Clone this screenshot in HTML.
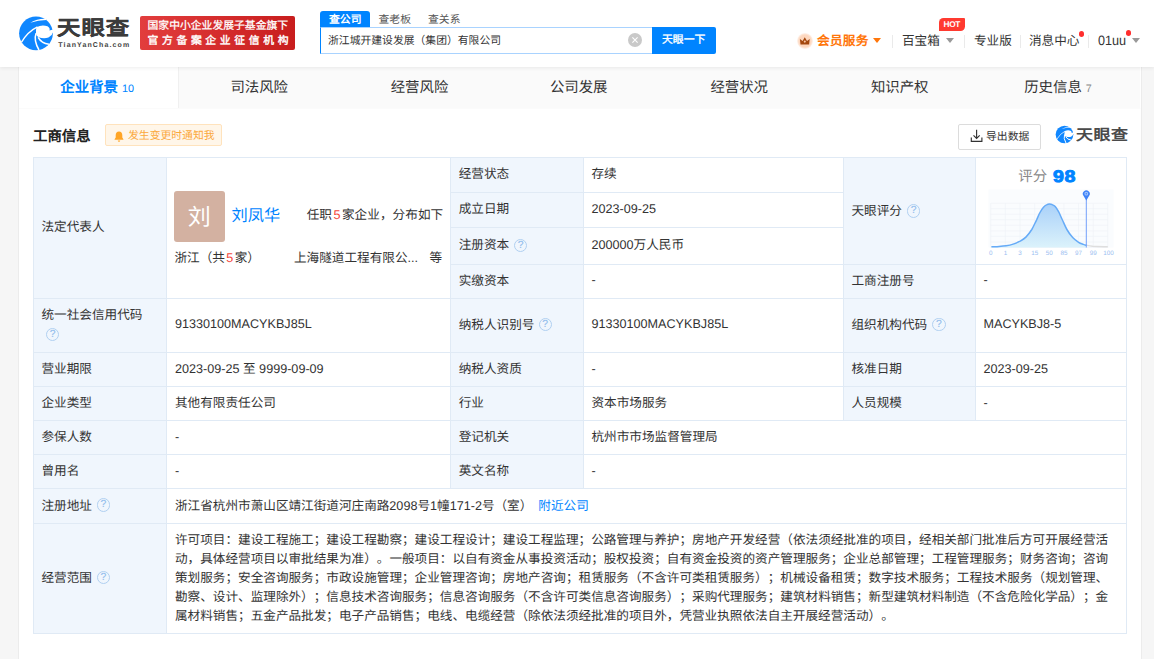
<!DOCTYPE html>
<html lang="zh-CN">
<head>
<meta charset="utf-8">
<title>天眼查</title>
<style>
*{box-sizing:border-box;margin:0;padding:0}
html,body{width:1154px;height:659px;overflow:hidden}
body{font-family:"Liberation Sans",sans-serif;background:#f6f6f6;color:#333;position:relative;font-size:12.62px;-webkit-font-smoothing:antialiased;text-rendering:geometricPrecision;text-spacing-trim:space-all}
.abs{position:absolute;white-space:nowrap}
#header{position:absolute;left:0;top:0;width:1154px;height:67px;background:#fff;box-shadow:0 1px 4px rgba(0,0,0,.075);z-index:5}
#main{position:absolute;left:18px;top:67px;width:1124px;height:592px;background:#fff;border-left:1px solid #ececec;border-right:1px solid #ececec}
/* tabs */
#tabs{position:absolute;left:0;top:0;width:1122px;height:42px;background:#fafafa;border-bottom:1px solid #fbfbfb;border-right:1px solid #fff}
#tabs .on{position:absolute;left:0;top:0;width:160px;height:41px;background:#fff;border-right:1px solid #f0f0f0}
.tab{position:absolute;top:0;height:42px;line-height:43px;font-size:14.42px;color:#333;white-space:nowrap;transform:translateX(-50%)}
.tab.a{color:#0084ff;font-weight:bold}
.tab small{font-size:10.82px;font-weight:normal;position:relative;top:-0.2px}
/* table */
.c{position:absolute;border:1px solid #e1ebf6;background:#fff}
.c.l{background:#f0f6fd}
.t{position:absolute;white-space:nowrap;font-size:12.62px;line-height:16px;color:#333}
.sc{width:933.2px;text-align:justify;text-align-last:justify}
.sc.last{width:auto;text-align:left;text-align-last:auto}
.q{position:absolute;width:13.4px;height:13.4px;border:1px solid #b0d0f1;border-radius:50%;color:#94beed;font-size:10.4px;line-height:12.9px;text-align:center;-webkit-text-stroke:0.15px #94beed}
.red{color:#f5483b}
.n5{margin:0 1.4px}
.blue{color:#0084ff}
</style>
</head>
<body>
<div id="header">
  <!-- logo -->
  <svg class="abs" style="left:14px;top:12px" width="44" height="42" viewBox="0 0 690 659">
    <circle cx="345" cy="335" r="265" fill="#1087ff"/>
    <path d="M256,167 Q365,102 505,108 L508,126 Q380,130 256,167Z" fill="#fff"/>
    <path d="M352,238 Q440,190 525,224 Q572,250 556,292 L640,268 L640,320 L611,320 Q598,372 540,402 Q470,426 385,398 Q350,370 345,340 Q340,280 352,238Z" fill="#fff"/>
    <path d="M368,232 Q216,306 118,472" stroke="#fff" stroke-width="22" fill="none"/>
    <path d="M346,335 Q305,450 392,596" stroke="#fff" stroke-width="24" fill="none"/>
    <path d="M378,398 Q430,490 548,506" stroke="#fff" stroke-width="24" fill="none"/>
  </svg>
  <div class="abs" style="left:57px;top:14px;font-size:20.6px;line-height:30px;font-weight:bold;color:#3b3b3b;-webkit-text-stroke:0.2px #3b3b3b;letter-spacing:0.9px;transform-origin:0 50%;transform:scaleX(1.135)">天眼查</div>
  <div class="abs" style="left:58.3px;top:40.6px;font-size:7px;line-height:9px;font-weight:bold;color:#444;letter-spacing:1.12px">TianYanCha.com</div>
  <!-- red banner -->
  <div class="abs" style="left:140px;top:16px;width:155px;height:34px;border-radius:2px;background:linear-gradient(90deg,#e23d3d,#c81d1d)"></div>
  <div class="abs" style="left:147.5px;top:18.6px;font-size:10.82px;line-height:15px;color:#fff;-webkit-text-stroke:0.28px #fff;letter-spacing:0">国家中小企业发展子基金旗下</div>
  <div class="abs" style="left:147.5px;top:33.5px;font-size:10.82px;line-height:15px;color:#fff;-webkit-text-stroke:0.42px #fff;letter-spacing:3.65px">官方备案企业征信机构</div>
  <!-- search -->
  <div class="abs" style="left:320px;top:11px;width:50px;height:17px;background:#0084ff;border-radius:3px 3px 0 0"></div>
  <div class="abs" style="left:329px;top:13px;font-size:10.82px;line-height:15px;font-weight:bold;color:#fff;letter-spacing:0">查公司</div>
  <div class="abs" style="left:378.5px;top:13px;font-size:10.82px;line-height:15px;color:#555;letter-spacing:0">查老板</div>
  <div class="abs" style="left:428px;top:13px;font-size:10.82px;line-height:15px;color:#555;letter-spacing:0">查关系</div>
  <div class="abs" style="left:320px;top:27px;width:333px;height:27px;border:1px solid #a9d3ff;border-left:1px solid #0084ff;background:#fff"></div>
  <div class="abs" style="left:328px;top:33.7px;font-size:10.82px;line-height:15px;color:#333;letter-spacing:0">浙江城开建设发展（集团）有限公司</div>
  <svg class="abs" style="left:628px;top:33px" width="14" height="14" viewBox="0 0 14 14"><circle cx="7" cy="7" r="7" fill="#c9c9c9"/><path d="M4.4 4.4L9.6 9.6M9.6 4.4L4.4 9.6" stroke="#fff" stroke-width="1.1"/></svg>
  <div class="abs" style="left:652px;top:27.3px;width:64px;height:27px;background:#0084ff;border-radius:0 2px 2px 0"></div>
  <div class="abs" style="left:662px;top:33.2px;font-size:10.82px;line-height:15px;color:#fff;-webkit-text-stroke:0.35px #fff;letter-spacing:0">天眼一下</div>
  <!-- nav -->
  <svg class="abs" style="left:797.2px;top:33.4px" width="16" height="16" viewBox="0 0 16 16"><defs><radialGradient id="cw"><stop offset="0.75" stop-color="#fdd8c0"/><stop offset="1" stop-color="#fdd8c0" stop-opacity="0.25"/></radialGradient></defs><circle cx="8" cy="8" r="8" fill="url(#cw)"/><path d="M2.9 5.9L5.6 8L7.8 4.2L10 8L12.7 5.9L12.1 11.5H3.5Z" fill="#a4480f"/><circle cx="7.8" cy="8.6" r="1.05" fill="#f5c5a4"/></svg>
  <div class="abs" style="left:817px;top:32.9px;font-size:12.62px;line-height:16px;font-weight:bold;color:#ff760a;letter-spacing:0.3px">会员服务</div>
  <div class="abs" style="left:873.1px;top:37.6px;width:0;height:0;border-left:4.4px solid transparent;border-right:4.4px solid transparent;border-top:5.3px solid #ff760a"></div>
  <div class="abs" style="left:892px;top:35px;width:1px;height:13px;background:#eaeaea"></div>
  <div class="abs" style="left:902px;top:32.9px;font-size:12.62px;line-height:16px;color:#333;letter-spacing:0">百宝箱</div>
  <div class="abs" style="left:945.5px;top:37.6px;width:0;height:0;border-left:4.4px solid transparent;border-right:4.4px solid transparent;border-top:5.3px solid #999"></div>
  <div class="abs" style="left:938.5px;top:18.3px;width:26px;height:13.2px;background:#ff3a30;border-radius:4.5px 1px 4.5px 0"></div>
  <div class="abs" style="left:943.4px;top:20.4px;font-size:8.3px;line-height:9px;font-weight:bold;color:#fff;letter-spacing:-0.25px">HOT</div>
  <div class="abs" style="left:964px;top:35px;width:1px;height:13px;background:#eaeaea"></div>
  <div class="abs" style="left:974px;top:32.9px;font-size:12.62px;line-height:16px;color:#333;letter-spacing:0">专业版</div>
  <div class="abs" style="left:1020px;top:35px;width:1px;height:13px;background:#eaeaea"></div>
  <div class="abs" style="left:1029px;top:32.9px;font-size:12.62px;line-height:16px;color:#333;letter-spacing:0">消息中心</div>
  <div class="abs" style="left:1078.8px;top:31px;width:5px;height:5.6px;border-radius:50%;background:#ff2e2e"></div>
  <div class="abs" style="left:1088px;top:35px;width:1px;height:13px;background:#eaeaea"></div>
  <div class="abs" style="left:1098px;top:32.9px;font-size:12.62px;line-height:16px;color:#333;transform-origin:0 82%;transform:scaleY(1.08)">01uu</div>
  <div class="abs" style="left:1126px;top:30.2px;width:5px;height:5.6px;border-radius:50%;background:#ff2e2e"></div>
  <div class="abs" style="left:1131.6px;top:37.6px;width:0;height:0;border-left:4.4px solid transparent;border-right:4.4px solid transparent;border-top:5.3px solid #999"></div>
</div>
<div id="main">
  <div id="tabs">
    <div class="on"></div>
    <div class="tab a" style="left:78.2px">企业背景 <small>10</small></div>
    <div class="tab" style="left:240.2px">司法风险</div>
    <div class="tab" style="left:400.5px">经营风险</div>
    <div class="tab" style="left:559.7px">公司发展</div>
    <div class="tab" style="left:720.2px">经营状况</div>
    <div class="tab" style="left:880.7px">知识产权</div>
    <div class="tab" style="left:1039px">历史信息 <small style="color:#888">7</small></div>
  </div>
  <!-- section title -->
  <div class="abs" style="left:14px;top:59.5px;font-size:14.42px;line-height:20px;font-weight:bold;color:#222;letter-spacing:0">工商信息</div>
  <div class="abs" style="left:86px;top:57px;width:117px;height:22px;background:#fff6e9;border:1px solid #ffe3bd;border-radius:2px"></div>
  <svg class="abs" style="left:95px;top:63.5px" width="10" height="11" viewBox="0 0 10 11"><path d="M5 0.6C2.9 0.6 1.7 2.2 1.7 4.2V6.6L0.6 8.2V8.8H9.4V8.2L8.3 6.6V4.2C8.3 2.2 7.1 0.6 5 0.6Z" fill="#ffa526"/><path d="M3.8 9.5a1.2 1.2 0 0 0 2.4 0Z" fill="#ffa526"/></svg>
  <div class="abs" style="left:109px;top:62.2px;font-size:10.82px;line-height:15px;color:#fba83c;letter-spacing:0">发生变更时通知我</div>
  <!-- export + logo -->
  <div class="abs" style="left:939px;top:57px;width:83px;height:26px;background:#fff;border:1px solid #dcdcdc;border-radius:2px"></div>
  <svg class="abs" style="left:951px;top:61.9px" width="13" height="14" viewBox="0 0 13 14"><path d="M6.6 0.8V9.2M3.5 6.3L6.6 9.4L9.7 6.3" stroke="#333" stroke-width="1.15" fill="none"/><path d="M1.3 8.6V12.4H11.9V8.6" stroke="#333" stroke-width="1.15" fill="none"/></svg>
  <div class="abs" style="left:967px;top:62.6px;font-size:10.82px;line-height:15px;color:#333;letter-spacing:0">导出数据</div>
  <svg class="abs" style="left:1036px;top:58.2px" width="19" height="19" viewBox="60 50 570 570">
    <circle cx="345" cy="335" r="265" fill="#1087ff"/>
    <path d="M256,167 Q365,102 505,108 L508,126 Q380,130 256,167Z" fill="#fff"/>
    <path d="M352,238 Q440,190 525,224 Q572,250 556,292 L640,268 L640,320 L611,320 Q598,372 540,402 Q470,426 385,398 Q350,370 345,340 Q340,280 352,238Z" fill="#fff"/>
    <path d="M368,232 Q216,306 118,472" stroke="#fff" stroke-width="22" fill="none"/>
    <path d="M346,335 Q305,450 392,596" stroke="#fff" stroke-width="30" fill="none"/>
    <path d="M378,398 Q430,490 548,506" stroke="#fff" stroke-width="30" fill="none"/>
  </svg>
  <div class="abs" style="left:1057px;top:57.4px;font-size:15px;line-height:24px;font-weight:bold;color:#4a4a4a;letter-spacing:0.5px;transform-origin:0 50%;transform:scaleX(1.13)">天眼查</div>
  <div id="tbl">
<div class="abs" style="left:14px;top:90px;width:133px;height:476px;background:#f0f6fd"></div>
<div class="abs" style="left:431px;top:90px;width:133px;height:331px;background:#f0f6fd"></div>
<div class="abs" style="left:824px;top:90px;width:132px;height:263px;background:#f0f6fd"></div>
<div class="abs" style="left:14px;top:90px;width:1094px;height:1px;background:#e0eaf5"></div>
<div class="abs" style="left:14px;top:566px;width:1094px;height:1px;background:#e0eaf5"></div>
<div class="abs" style="left:14px;top:90px;width:1px;height:477px;background:#e0eaf5"></div>
<div class="abs" style="left:1107px;top:90px;width:1px;height:477px;background:#e0eaf5"></div>
<div class="abs" style="left:147px;top:90px;width:1px;height:477px;background:#e0eaf5"></div>
<div class="abs" style="left:431px;top:90px;width:1px;height:332px;background:#e0eaf5"></div>
<div class="abs" style="left:564px;top:90px;width:1px;height:332px;background:#e0eaf5"></div>
<div class="abs" style="left:824px;top:90px;width:1px;height:264px;background:#e0eaf5"></div>
<div class="abs" style="left:956px;top:90px;width:1px;height:264px;background:#e0eaf5"></div>
<div class="abs" style="left:431px;top:125px;width:394px;height:1px;background:#e0eaf5"></div>
<div class="abs" style="left:431px;top:160px;width:394px;height:1px;background:#e0eaf5"></div>
<div class="abs" style="left:431px;top:197px;width:677px;height:1px;background:#e0eaf5"></div>
<div class="abs" style="left:14px;top:231px;width:1094px;height:1px;background:#e0eaf5"></div>
<div class="abs" style="left:14px;top:285px;width:1094px;height:1px;background:#e0eaf5"></div>
<div class="abs" style="left:14px;top:319px;width:1094px;height:1px;background:#e0eaf5"></div>
<div class="abs" style="left:14px;top:353px;width:1094px;height:1px;background:#e0eaf5"></div>
<div class="abs" style="left:14px;top:387px;width:1094px;height:1px;background:#e0eaf5"></div>
<div class="abs" style="left:14px;top:421px;width:1094px;height:1px;background:#e0eaf5"></div>
<div class="abs" style="left:14px;top:456px;width:1094px;height:1px;background:#e0eaf5"></div>
<div class="t" style="left:22.5px;top:152.2px;">法定代表人</div>
<div class="t" style="left:22.5px;top:240.3px;">统一社会信用代码</div>
<div class="q" style="left:27px;top:260.7px">?</div>
<div class="t" style="left:22.5px;top:294.2px;">营业期限</div>
<div class="t" style="left:22.5px;top:328.2px;">企业类型</div>
<div class="t" style="left:22.5px;top:362.2px;">参保人数</div>
<div class="t" style="left:22.5px;top:396.2px;">曾用名</div>
<div class="t" style="left:22.5px;top:430.7px;">注册地址</div>
<div class="q" style="left:77.6px;top:431.3px">?</div>
<div class="t" style="left:22.5px;top:503.2px;">经营范围</div>
<div class="q" style="left:77.6px;top:503.8px">?</div>
<div class="t" style="left:439.7px;top:98.7px;">经营状态</div>
<div class="t" style="left:439.7px;top:133.7px;">成立日期</div>
<div class="t" style="left:439.7px;top:170.4px;">注册资本</div>
<div class="t" style="left:439.7px;top:205.9px;">实缴资本</div>
<div class="t" style="left:439.7px;top:249.9px;">纳税人识别号</div>
<div class="t" style="left:439.7px;top:294.2px;">纳税人资质</div>
<div class="t" style="left:439.7px;top:328.2px;">行业</div>
<div class="t" style="left:439.7px;top:362.2px;">登记机关</div>
<div class="t" style="left:439.7px;top:396.2px;">英文名称</div>
<div class="q" style="left:495px;top:171.5px">?</div>
<div class="q" style="left:519.5px;top:251.0px">?</div>
<div class="t" style="left:832.5px;top:136.1px;">天眼评分</div>
<div class="q" style="left:888px;top:137.4px">?</div>
<div class="t" style="left:832.5px;top:205.9px;">工商注册号</div>
<div class="t" style="left:832.5px;top:249.9px;">组织机构代码</div>
<div class="t" style="left:832.5px;top:294.2px;">核准日期</div>
<div class="t" style="left:832.5px;top:328.2px;">人员规模</div>
<div class="q" style="left:913.3px;top:251.0px">?</div>
<div class="t" style="left:156.0px;top:249.2px;">91330100MACYKBJ85L</div>
<div class="t" style="left:156.0px;top:294.2px;">2023-09-25 至 9999-09-09</div>
<div class="t" style="left:156.0px;top:328.2px;">其他有限责任公司</div>
<div class="t" style="left:156.0px;top:361.6px;">-</div>
<div class="t" style="left:156.0px;top:395.6px;">-</div>
<div class="t" style="left:156.0px;top:430.7px;">浙江省杭州市萧山区靖江街道河庄南路2098号1幢171-2号（室）<span class="blue" style="margin-left:6px">附近公司</span></div>
<div class="t" style="left:572.5px;top:98.7px;">存续</div>
<div class="t" style="left:572.5px;top:133.7px;">2023-09-25</div>
<div class="t" style="left:572.5px;top:170.4px;">200000万人民币</div>
<div class="t" style="left:572.5px;top:205.2px;">-</div>
<div class="t" style="left:572.5px;top:249.2px;">91330100MACYKBJ85L</div>
<div class="t" style="left:572.5px;top:293.6px;">-</div>
<div class="t" style="left:572.5px;top:328.2px;">资本市场服务</div>
<div class="t" style="left:572.5px;top:362.2px;">杭州市市场监督管理局</div>
<div class="t" style="left:572.5px;top:395.6px;">-</div>
<div class="t" style="left:964.5px;top:205.2px;">-</div>
<div class="t" style="left:964.5px;top:249.2px;">MACYKBJ8-5</div>
<div class="t" style="left:964.5px;top:293.6px;">2023-09-25</div>
<div class="t" style="left:964.5px;top:327.6px;">-</div>
<div class="abs" style="left:155px;top:124px;width:51px;height:51px;border-radius:3px;background:#d3b1a1"></div>
<div class="abs" style="left:168.8px;top:134.6px;font-size:23px;line-height:30px;color:#fff">刘</div>
<div class="abs blue" style="left:212.5px;top:137px;font-size:16.23px;line-height:24px;letter-spacing:0">刘凤华</div>
<div class="t" style="left:287.7px;top:139.9px;letter-spacing:0.06px">任职<span class="red n5">5</span>家企业，分布如下</div>
<div class="t" style="left:155.5px;top:183.0px;">浙江（共<span class="red n5">5</span>家）</div>
<div class="t" style="left:275px;top:183.0px;">上海隧道工程有限公...</div>
<div class="t" style="left:410.5px;top:183.0px;">等</div>
<div class="t sc" style="left:156.0px;top:465.1px;">许可项目：建设工程施工；建设工程勘察；建设工程设计；建设工程监理；公路管理与养护；房地产开发经营（依法须经批准的项目，经相关部门批准后方可开展经营活</div>
<div class="t sc" style="left:156.0px;top:484.0px;">动，具体经营项目以审批结果为准）。一般项目：以自有资金从事投资活动；股权投资；自有资金投资的资产管理服务；企业总部管理；工程管理服务；财务咨询；咨询</div>
<div class="t sc" style="left:156.0px;top:502.9px;">策划服务；安全咨询服务；市政设施管理；企业管理咨询；房地产咨询；租赁服务（不含许可类租赁服务）；机械设备租赁；数字技术服务；工程技术服务（规划管理、</div>
<div class="t sc" style="left:156.0px;top:521.9px;">勘察、设计、监理除外）；信息技术咨询服务；信息咨询服务（不含许可类信息咨询服务）；采购代理服务；建筑材料销售；新型建筑材料制造（不含危险化学品）；金</div>
<div class="t sc last" style="left:156.0px;top:540.8px;">属材料销售；五金产品批发；电子产品销售；电线、电缆经营（除依法须经批准的项目外，凭营业执照依法自主开展经营活动）。</div>
<!--CHART--><svg class="abs" style="left:966px;top:93px" width="140" height="100" viewBox="985 160 140 100">
<defs><linearGradient id="cg" x1="0" y1="0" x2="0" y2="1"><stop offset="0" stop-color="#aad1f9"/><stop offset="1" stop-color="#dbf2fb"/></linearGradient></defs>
<rect x="988.5" y="189.5" width="125" height="58" fill="#fafcfe"/>
<g stroke="#eff2f7" stroke-width="0.65" fill="none"><path d="M990.8,203.2V247.5"/><path d="M1005.4,203.2V247.5"/><path d="M1020.0,203.2V247.5"/><path d="M1034.7,203.2V247.5"/><path d="M1049.3,203.2V247.5"/><path d="M1063.9,203.2V247.5"/><path d="M1078.5,203.2V247.5"/><path d="M1093.2,203.2V247.5"/><path d="M1107.8,203.2V247.5"/><path d="M990.8,203.2H1107.8"/><path d="M990.8,208.7H1107.8"/><path d="M990.8,214.3H1107.8"/><path d="M990.8,219.8H1107.8"/><path d="M990.8,225.3H1107.8"/><path d="M990.8,230.9H1107.8"/><path d="M990.8,236.4H1107.8"/><path d="M990.8,242.0H1107.8"/><path d="M990.8,247.5H1107.8"/></g>
<path d="M991.4,246.8 C992.7,246.7 996.6,246.6 999.0,246.4 C1001.5,246.3 1003.7,246.2 1006.1,245.8 C1008.4,245.4 1010.7,244.9 1013.1,244.1 C1015.4,243.3 1018.0,242.3 1020.1,241.2 C1022.2,240.0 1024.0,239.0 1025.9,237.1 C1027.9,235.1 1030.0,232.3 1031.8,229.5 C1033.5,226.6 1035.1,222.9 1036.5,220.1 C1037.8,217.3 1038.8,214.6 1040.0,212.5 C1041.2,210.3 1042.3,208.5 1043.5,207.2 C1044.7,205.9 1046.0,205.2 1047.0,204.7 C1048.0,204.1 1048.5,204.1 1049.3,204.1 C1050.2,204.1 1051.3,204.2 1052.3,204.7 C1053.2,205.1 1054.1,205.4 1055.2,206.6 C1056.3,207.9 1057.5,209.8 1058.7,211.9 C1059.9,214.1 1060.8,216.6 1062.2,219.5 C1063.6,222.4 1065.1,226.4 1066.9,229.5 C1068.6,232.5 1070.8,235.5 1072.7,237.6 C1074.7,239.8 1076.8,241.2 1078.6,242.3 C1080.3,243.5 1082.0,243.9 1083.3,244.4 C1084.6,244.9 1085.8,245.1 1086.3,245.2 L1086.3,247.4 L991.4,247.4Z" fill="url(#cg)"/>
<path d="M1086.3,245.2 C1087.4,245.4 1089.0,245.9 1092.6,246.2 C1096.2,246.4 1105.3,246.7 1107.8,246.8" stroke="#dedede" stroke-width="1.5" fill="none"/>
<path d="M991.4,246.8 C992.7,246.7 996.6,246.6 999.0,246.4 C1001.5,246.3 1003.7,246.2 1006.1,245.8 C1008.4,245.4 1010.7,244.9 1013.1,244.1 C1015.4,243.3 1018.0,242.3 1020.1,241.2 C1022.2,240.0 1024.0,239.0 1025.9,237.1 C1027.9,235.1 1030.0,232.3 1031.8,229.5 C1033.5,226.6 1035.1,222.9 1036.5,220.1 C1037.8,217.3 1038.8,214.6 1040.0,212.5 C1041.2,210.3 1042.3,208.5 1043.5,207.2 C1044.7,205.9 1046.0,205.2 1047.0,204.7 C1048.0,204.1 1048.5,204.1 1049.3,204.1 C1050.2,204.1 1051.3,204.2 1052.3,204.7 C1053.2,205.1 1054.1,205.4 1055.2,206.6 C1056.3,207.9 1057.5,209.8 1058.7,211.9 C1059.9,214.1 1060.8,216.6 1062.2,219.5 C1063.6,222.4 1065.1,226.4 1066.9,229.5 C1068.6,232.5 1070.8,235.5 1072.7,237.6 C1074.7,239.8 1076.8,241.2 1078.6,242.3 C1080.3,243.5 1082.0,243.9 1083.3,244.4 C1084.6,244.9 1085.8,245.1 1086.3,245.2" stroke="#66abf7" stroke-width="1.5" fill="none"/>
<path d="M1086.3,199V247.5" stroke="#6395f9" stroke-width="0.9"/>
<path d="M1086.3,200.6 L1083.3,195.6 A3.5,3.5 0 1 1 1089.3,195.6Z" fill="#3f83f8"/>
<circle cx="1086.3" cy="193.7" r="1.9" fill="#9cc0fb"/><circle cx="1086.3" cy="193.7" r="0.8" fill="#3f83f8"/>
<g font-family="Liberation Sans, sans-serif" font-size="6.3" fill="#9cc0f1"><text x="990.8" y="255.3" text-anchor="middle">0</text><text x="1005.4" y="255.3" text-anchor="middle">1</text><text x="1020.0" y="255.3" text-anchor="middle">3</text><text x="1034.7" y="255.3" text-anchor="middle">15</text><text x="1049.3" y="255.3" text-anchor="middle">50</text><text x="1063.9" y="255.3" text-anchor="middle">85</text><text x="1078.5" y="255.3" text-anchor="middle">97</text><text x="1093.2" y="255.3" text-anchor="middle">99</text><text x="1108.4" y="255.3" text-anchor="middle">100</text></g>
</svg>
<div class="abs" style="left:999.3px;top:99.8px;font-size:14.42px;line-height:20px;color:#8a8a8a">评分</div>
<div class="abs" style="left:1034px;top:99.9px;font-size:16.8px;line-height:20px;font-weight:bold;color:#0084ff;-webkit-text-stroke:0.9px #0084ff;transform-origin:0 50%;transform:scaleX(1.17);letter-spacing:0.6px">98</div><!--/CHART-->
</div>
</div>
</body>
</html>
